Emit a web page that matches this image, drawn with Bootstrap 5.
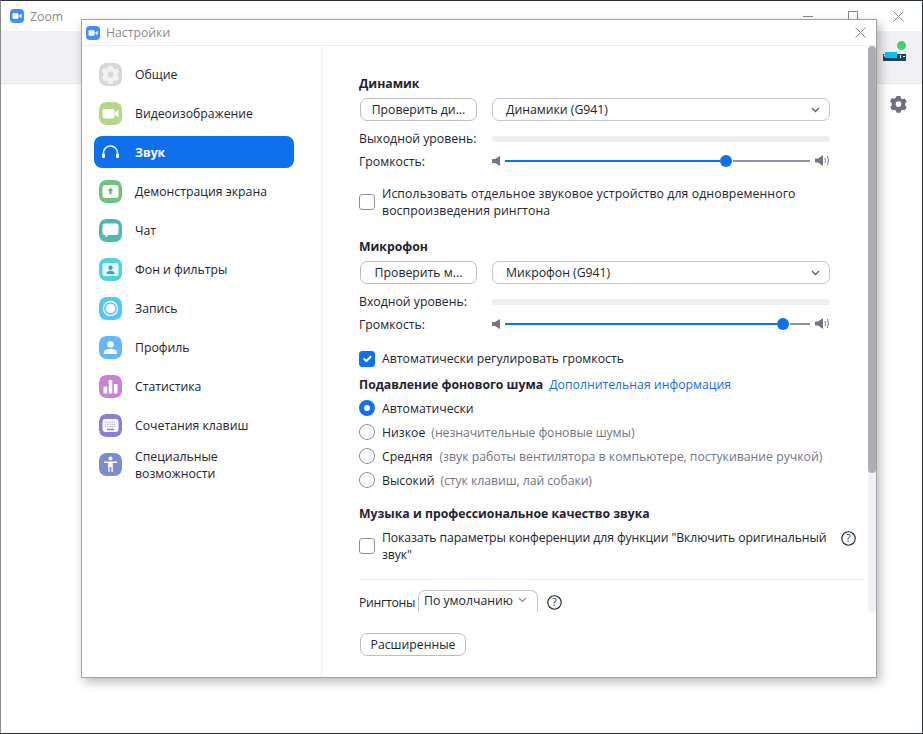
<!DOCTYPE html>
<html lang="ru">
<head>
<meta charset="utf-8">
<title>Zoom</title>
<link href="https://cdn.jsdelivr.net/npm/bootstrap@5.3.0/dist/css/bootstrap.min.css" rel="stylesheet">
<style>
html,body{height:100%;margin:0}
body{font-family:"Open Sans","Noto Sans",sans-serif;font-size:12.25px;line-height:17px;color:#232333;background:#fff;overflow:hidden}
.zm-win{position:relative;height:734px;border:1px solid #2d3136;border-left-color:#8a8d90;background:#fff}
.zm-title{height:30px;padding-left:9px;color:#8b8b8b}
.zm-logo{margin-right:6px;flex:none}
.zm-ctrls{margin-left:auto;margin-right:18px;gap:35px}
.zm-tool{height:53px;background:#f1f1f3;border-bottom:1px solid #e8e8ea;padding-right:16px}
.zm-avatar{position:relative;width:23px;height:10px;margin-top:20px}
.zm-dot{position:absolute;right:-1px;top:-11px;width:11px;height:11px;border-radius:50%;background:#3ed071;border:1.5px solid #fff}
.zm-gear{padding-right:15px;padding-top:12px}
.zm-dialog{position:absolute;left:80px;top:18px;width:796px;height:659px;background:#fff;border:1px solid #a2a2a2;box-shadow:3px 4px 10px rgba(0,0,0,.28)}
.zm-dhead{height:26px;padding-left:4px;padding-right:10px;color:#8b8b8b;border-bottom:1px solid #eeeeee}
.zm-dbody{height:631px}
.zm-side{width:240px;flex:none;border-right:1px solid #f0f0f2;padding:9px 27px 0 12px}
.zm-item{height:39px;gap:13px;padding-left:5px;color:#232333;text-decoration:none;border-radius:8px}
.zm-item.zm-on{height:32px;margin:3px 0 4px;background:#0e71eb;color:#fff;font-weight:700}
.zm-item span{line-height:17px}
.zm-ico{flex:none;width:23px;height:23px;border-radius:7px;display:block}
.zm-main{width:546px;flex:none;padding:29px 0 0 37px}
.zm-scroll{width:8px;height:566px;background:#f1f1f6;border-radius:4px;margin-left:0;flex:none}
.zm-thumb{height:427px;background:#adadb5;border-radius:4px}
.zm-h{font-weight:700;height:17px;margin:0}
.zm-ctl{margin-top:6px}
.zm-btn{height:23px;border:1px solid #bcbcc8;border-radius:7px;background:#fff;color:#232333;font-size:12.25px;line-height:21px;padding:0;margin-left:1px;text-align:center}
.zm-btn:hover{background:#fff;color:#232333;border-color:#bcbcc8}
.zm-b1{width:117px;flex:none}
.zm-sel{width:338px;flex:none;margin-left:15px;height:23px;border:1px solid #c6c4d6;border-radius:7px;padding:0 9px 0 13px;background:#fff}
.zm-lab{width:133px;flex:none}
.zm-meter{width:338px;height:6px;border-radius:3px;background:#eeeeee}
.zm-row{height:17px}
.zm-r1{margin-top:9px}
.zm-r2{margin-top:6px}
.zm-sl{width:338px;flex:none;margin-top:-2px}
.zm-sl svg,.zm-sl div{flex:none}
.zm-spk1{margin-right:5px}
.zm-spk2{margin-left:5px}
.zm-fill{height:2px;background:#0e71eb}
.zm-rest{height:2px;background:#908ea2}
.zm-knob{width:12px;height:12px;border-radius:50%;background:#0e71eb;margin-right:1px}
.zm-chk{width:16px;height:16px;margin:0 7px 0 0;flex:none;border:1px solid #8f8f8f;border-radius:4px;background-color:#fff}
.form-check-input.zm-chk:checked{background-color:#0e71eb;border-color:#0e71eb}
.form-check-input.zm-rad{border-radius:50%;border:1.3px solid #8f8f8f}
.form-check-input.zm-rad:checked{border:5px solid #0e71eb;background-color:#fff;background-image:none}
.zm-hint{color:#747487;margin-left:6px;letter-spacing:-.06px}
.zm-hint-long{margin-left:7px;letter-spacing:0}
.zm-wide{letter-spacing:.1px}
.zm-tight{letter-spacing:-.1px;width:452px}
.zm-link{color:#0e71eb;text-decoration:none;margin-left:6px}
.zm-radrow{height:24px}
.zm-hr{height:1px;background:#ededf0;width:504px;margin:0;border:0;opacity:1}
.zm-ring{height:22px;width:120px;flex:none;margin:0 9px 0 4px;border:1px solid #c6c4d6;border-bottom:0;border-radius:7px 7px 0 0;padding:0 10px 3px 5px;background:#fff}
.zm-ringlab{padding-top:2px;width:55px;flex:none;letter-spacing:-.3px}
.zm-help1{margin:2px 0 0 7px;align-self:flex-start}
.zm-help2{margin-top:2px}
.zm-adv{width:106px;height:23px;margin-top:21px}
</style>
</head>
<body>
<div class="zm-win">
  <div class="zm-title d-flex align-items-center">
    <svg width="14" height="14" viewBox="0 0 14 14" class="zm-logo"><rect width="14" height="14" rx="4" fill="#3f8ff7"/><rect x="2.500" y="4.300" width="6" height="5.400" rx="1.200" fill="#fff"/><path d="M9.300 6.400 11.600 4.800v4.400L9.300 7.600z" fill="#fff"/></svg>
    <span>Zoom</span>
    <div class="zm-ctrls d-flex align-items-center">
      <svg width="10" height="10" viewBox="0 0 10 10"><path d="M0 5.500h10" stroke="#8a8a8a"/></svg>
      <svg width="10" height="10" viewBox="0 0 10 10"><rect x=".5" y=".5" width="9" height="9" fill="none" stroke="#8a8a8a"/></svg>
      <svg width="11" height="11" viewBox="0 0 11 11"><path d="M.5.500l10 10M10.500.500l-10 10" stroke="#8a8a8a"/></svg>
    </div>
  </div>
  <div class="zm-tool d-flex justify-content-end align-items-start">
    <div class="zm-avatar">
      <svg width="23" height="10" viewBox="0 0 23 10" class="d-block"><rect y="3" width="23" height="7" fill="#27405a"/><rect x="1" y="3.500" width="5" height="2" fill="#fff"/><rect x="2" y="1" width="12" height="6" fill="#08c0f5"/><rect x="17" y="4" width="1" height="3" fill="#fff"/><rect x="20" y="5" width="2" height="1" fill="#fff"/></svg>
      <b class="zm-dot"></b>
    </div>
  </div>
  <div class="zm-gear d-flex justify-content-end">
    <svg width="17" height="17" viewBox="0 0 17 17"><path fill="#6e6e7e" fill-rule="evenodd" d="M6.500 0h4l.6 2.300 1.800 1 2.300-.6 2 3.400-1.700 1.700v2.100l1.700 1.700-2 3.400-2.300-.6-1.800 1-.6 2.300h-4l-.6-2.300-1.800-1-2.300.6-2-3.400 1.700-1.700V7.300L-.4 5.600l2-3.400 2.300.6 1.800-1zM8.500 5.500a3 3 0 1 0 0 6 3 3 0 0 0 0-6z" transform="translate(.4 0) scale(.95)"/></svg>
  </div>

  <div class="zm-dialog">
    <div class="zm-dhead d-flex align-items-center">
      <svg width="14" height="14" viewBox="0 0 14 14" class="zm-logo"><rect width="14" height="14" rx="4" fill="#3f8ff7"/><rect x="2.500" y="4.300" width="6" height="5.400" rx="1.200" fill="#fff"/><path d="M9.300 6.400 11.600 4.800v4.400L9.300 7.600z" fill="#fff"/></svg>
      <span>Настройки</span>
      <svg width="11" height="11" viewBox="0 0 11 11" class="ms-auto"><path d="M.5.500l10 10M10.500.500l-10 10" stroke="#8a8a8a"/></svg>
    </div>
    <div class="zm-dbody d-flex">
      <nav class="zm-side d-flex flex-column">
        <a class="zm-item d-flex align-items-center" href="#">
          <svg class="zm-ico" viewBox="0 0 23 23"><rect width="23" height="23" rx="7" fill="#d8d8d8"/><path fill="#f2f2f2" fill-rule="evenodd" d="M6.500 0h4l.6 2.300 1.800 1 2.300-.6 2 3.400-1.700 1.700v2.100l1.700 1.700-2 3.400-2.300-.6-1.800 1-.6 2.300h-4l-.6-2.300-1.800-1-2.300.6-2-3.400 1.700-1.700V7.300L-.4 5.600l2-3.400 2.300.6 1.800-1zM8.500 5.500a3 3 0 1 0 0 6 3 3 0 0 0 0-6z" transform="translate(3 3) scale(1)"/></svg>
          <span>Общие</span></a>
        <a class="zm-item d-flex align-items-center" href="#">
          <svg class="zm-ico" viewBox="0 0 23 23"><rect width="23" height="23" rx="7" fill="#b4d88a"/><rect x="3.500" y="7" width="12" height="9.500" rx="2" fill="#fff"/><path d="M16 10.500l3.500-2.500v7.500L16 13z" fill="#fff"/></svg>
          <span>Видеоизображение</span></a>
        <a class="zm-item zm-on d-flex align-items-center" href="#">
          <svg class="zm-ico" viewBox="0 0 23 23"><path d="M4.500 15v-3a7 7 0 0 1 14 0v3" fill="none" stroke="#fff" stroke-width="1.500"/><rect x="3" y="12.500" width="3" height="4.500" rx="1.200" fill="#fff"/><rect x="17" y="12.500" width="3" height="4.500" rx="1.200" fill="#fff"/></svg>
          <span>Звук</span></a>
        <a class="zm-item d-flex align-items-center" href="#">
          <svg class="zm-ico" viewBox="0 0 23 23"><rect width="23" height="23" rx="7" fill="#70c27f"/><rect x="3.500" y="5" width="16" height="13" rx="2.500" fill="#fff"/><path d="M11.500 7.800l3 3h-2v3.500h-2v-3.500h-2z" fill="#5cb56c"/></svg>
          <span>Демонстрация экрана</span></a>
        <a class="zm-item d-flex align-items-center" href="#">
          <svg class="zm-ico" viewBox="0 0 23 23"><rect width="23" height="23" rx="7" fill="#52b9ad"/><path fill="#fff" d="M6 4.500h11a2.500 2.500 0 0 1 2.500 2.500v6.500a2.500 2.500 0 0 1-2.500 2.500H9.500L6.500 18.500V16H6a2.500 2.500 0 0 1-2.500-2.500V7A2.500 2.500 0 0 1 6 4.500z"/></svg>
          <span>Чат</span></a>
        <a class="zm-item d-flex align-items-center" href="#">
          <svg class="zm-ico" viewBox="0 0 23 23"><rect width="23" height="23" rx="7" fill="#4fd2e4"/><rect x="3.500" y="5" width="16" height="13" rx="2" fill="#e4f8fb"/><circle cx="11.500" cy="9.800" r="2.200" fill="#2ba6c9"/><path d="M7.500 16c0-2.300 1.800-3.200 4-3.200s4 .9 4 3.200z" fill="#2ba6c9"/></svg>
          <span>Фон и фильтры</span></a>
        <a class="zm-item d-flex align-items-center" href="#">
          <svg class="zm-ico" viewBox="0 0 23 23"><rect width="23" height="23" rx="7" fill="#55c6fa"/><circle cx="11.500" cy="11.500" r="7" fill="none" stroke="#fff" stroke-width="1.300"/><circle cx="11.500" cy="11.500" r="4.800" fill="#fff"/></svg>
          <span>Запись</span></a>
        <a class="zm-item d-flex align-items-center" href="#">
          <svg class="zm-ico" viewBox="0 0 23 23"><rect width="23" height="23" rx="7" fill="#66b6fa"/><circle cx="11.500" cy="8.500" r="3.200" fill="#fff"/><path d="M5 18v-1.500c0-2.500 3-3.500 6.500-3.500s6.500 1 6.500 3.500V18z" fill="#fff"/></svg>
          <span>Профиль</span></a>
        <a class="zm-item d-flex align-items-center" href="#">
          <svg class="zm-ico" viewBox="0 0 23 23"><rect width="23" height="23" rx="7" fill="#c584d6"/><rect x="4.500" y="11.500" width="3.600" height="7" rx=".6" fill="#fff"/><rect x="9.700" y="5" width="3.600" height="13.500" rx=".6" fill="#fff"/><rect x="14.900" y="9" width="3.600" height="9.500" rx=".6" fill="#fff"/></svg>
          <span>Статистика</span></a>
        <a class="zm-item d-flex align-items-center" href="#">
          <svg class="zm-ico" viewBox="0 0 23 23"><rect width="23" height="23" rx="7" fill="#8c7fd2"/><rect x="3.500" y="5" width="16" height="13" rx="3" fill="#fff"/><path d="M6 8.200h11M6 10.400h11M6 12.600h11" stroke="#b4abe2" stroke-width="1.300" stroke-dasharray="1.300 .9"/><path d="M8 15.500h7" stroke="#8c7fd2" stroke-width="1.300"/></svg>
          <span>Сочетания клавиш</span></a>
        <a class="zm-item d-flex align-items-center" href="#">
          <svg class="zm-ico" viewBox="0 0 23 23"><rect width="23" height="23" rx="7" fill="#7d8cd0"/><circle cx="11.500" cy="5.500" r="2" fill="#fff"/><path d="M5 8.500h13v1.500h-4.200v9h-1.400v-5h-1.800v5H9.200v-9H5z" fill="#fff"/></svg>
          <span>Специальные<br>возможности</span></a>
      </nav>
      <main class="zm-main">
        <p class="zm-h">Динамик</p>
        <div class="d-flex zm-ctl">
          <button class="btn zm-btn zm-b1" type="button">Проверить ди...</button>
          <div class="zm-sel d-flex align-items-center justify-content-between"><span>Динамики (G941)</span>
            <svg width="9" height="6" viewBox="0 0 9 6"><path d="M1 1l3.500 3.500L8 1" fill="none" stroke="#5c5c6c" stroke-width="1.300"/></svg></div>
        </div>
        <div class="zm-row zm-r1 d-flex align-items-center">
          <span class="zm-lab">Выходной уровень:</span><div class="zm-meter"></div>
        </div>
        <div class="zm-row zm-r2 d-flex align-items-center">
          <span class="zm-lab">Громкость:</span>
          <div class="zm-sl d-flex align-items-center">
            <svg width="8" height="10" viewBox="0 0 8 10" class="zm-spk1"><path d="M0 3h3l5-3v10L3 7H0z" fill="#74748a"/></svg>
            <div class="zm-fill" style="width:215px"></div>
            <div class="zm-knob"></div>
            <div class="zm-rest" style="width:77px"></div>
            <svg width="15" height="11" viewBox="0 0 15 11" class="zm-spk2"><path d="M0 3.500h3l5-3.500v11L3 7.500H0z" fill="#74748a"/><path d="M10 3q1 2.500 0 5M12.500 1q2 4.500 0 9" fill="none" stroke="#74748a" stroke-width="1"/></svg>
          </div>
        </div>
        <div class="d-flex align-items-center" style="margin-top:15px">
          <input class="form-check-input zm-chk" type="checkbox">
          <label class="zm-wide">Использовать отдельное звуковое устройство для одновременного<br>воспроизведения рингтона</label>
        </div>
        <p class="zm-h" style="margin-top:19px">Микрофон</p>
        <div class="d-flex zm-ctl">
          <button class="btn zm-btn zm-b1" type="button">Проверить м...</button>
          <div class="zm-sel d-flex align-items-center justify-content-between"><span>Микрофон (G941)</span>
            <svg width="9" height="6" viewBox="0 0 9 6"><path d="M1 1l3.500 3.500L8 1" fill="none" stroke="#5c5c6c" stroke-width="1.300"/></svg></div>
        </div>
        <div class="zm-row zm-r1 d-flex align-items-center">
          <span class="zm-lab">Входной уровень:</span><div class="zm-meter"></div>
        </div>
        <div class="zm-row zm-r2 d-flex align-items-center">
          <span class="zm-lab">Громкость:</span>
          <div class="zm-sl d-flex align-items-center">
            <svg width="8" height="10" viewBox="0 0 8 10" class="zm-spk1"><path d="M0 3h3l5-3v10L3 7H0z" fill="#74748a"/></svg>
            <div class="zm-fill" style="width:272px"></div>
            <div class="zm-knob"></div>
            <div class="zm-rest" style="width:20px"></div>
            <svg width="15" height="11" viewBox="0 0 15 11" class="zm-spk2"><path d="M0 3.500h3l5-3.500v11L3 7.500H0z" fill="#74748a"/><path d="M10 3q1 2.500 0 5M12.500 1q2 4.500 0 9" fill="none" stroke="#74748a" stroke-width="1"/></svg>
          </div>
        </div>
        <div class="d-flex align-items-center" style="margin-top:17px">
          <input class="form-check-input zm-chk" type="checkbox" checked>
          <label>Автоматически регулировать громкость</label>
        </div>
        <div class="d-flex align-items-center" style="margin-top:9px;height:17px">
          <b>Подавление фонового шума</b><a class="zm-link" href="#">Дополнительная информация</a>
        </div>
        <div class="zm-radrow d-flex align-items-center" style="margin-top:3px">
          <input class="form-check-input zm-chk zm-rad" type="radio" name="n" checked><label>Автоматически</label>
        </div>
        <div class="zm-radrow d-flex align-items-center">
          <input class="form-check-input zm-chk zm-rad" type="radio" name="n"><label>Низкое</label><span class="zm-hint">(незначительные фоновые шумы)</span>
        </div>
        <div class="zm-radrow d-flex align-items-center">
          <input class="form-check-input zm-chk zm-rad" type="radio" name="n"><label>Средняя</label><span class="zm-hint zm-hint-long">(звук работы вентилятора в компьютере, постукивание ручкой)</span>
        </div>
        <div class="zm-radrow d-flex align-items-center">
          <input class="form-check-input zm-chk zm-rad" type="radio" name="n"><label>Высокий</label><span class="zm-hint">(стук клавиш, лай собаки)</span>
        </div>
        <p class="zm-h" style="margin-top:13px">Музыка и профессиональное качество звука</p>
        <div class="d-flex align-items-center" style="margin-top:7px">
          <input class="form-check-input zm-chk" type="checkbox">
          <label class="zm-tight">Показать параметры конференции для функции "Включить оригинальный звук"</label>
          <svg width="15" height="15" viewBox="0 0 15 15" class="zm-help1"><circle cx="7.500" cy="7.500" r="6.700" fill="none" stroke="#232333" stroke-width="1.100"/><text x="7.500" y="11" font-size="10" text-anchor="middle" fill="#232333">?</text></svg>
        </div>
        <hr class="zm-hr" style="margin-top:16px">
        <div class="d-flex align-items-center" style="margin-top:10px">
          <span class="zm-ringlab">Рингтоны</span>
          <div class="zm-ring d-flex align-items-center justify-content-between"><span>По умолчанию</span>
            <svg width="9" height="6" viewBox="0 0 9 6"><path d="M1 1l3.500 3.500L8 1" fill="none" stroke="#8a8a96" stroke-width="1.200"/></svg></div>
          <svg width="15" height="15" viewBox="0 0 15 15" class="zm-help2"><circle cx="7.500" cy="7.500" r="6.700" fill="none" stroke="#232333" stroke-width="1.100"/><text x="7.500" y="11" font-size="10" text-anchor="middle" fill="#232333">?</text></svg>
        </div>
        <button class="btn zm-btn zm-adv d-block" type="button">Расширенные</button>
      </main>
      <div class="zm-scroll"><div class="zm-thumb"></div></div>
    </div>
  </div>
</div>
<script src="https://cdn.jsdelivr.net/npm/bootstrap@5.3.0/dist/js/bootstrap.bundle.min.js"></script>
</body>
</html>
